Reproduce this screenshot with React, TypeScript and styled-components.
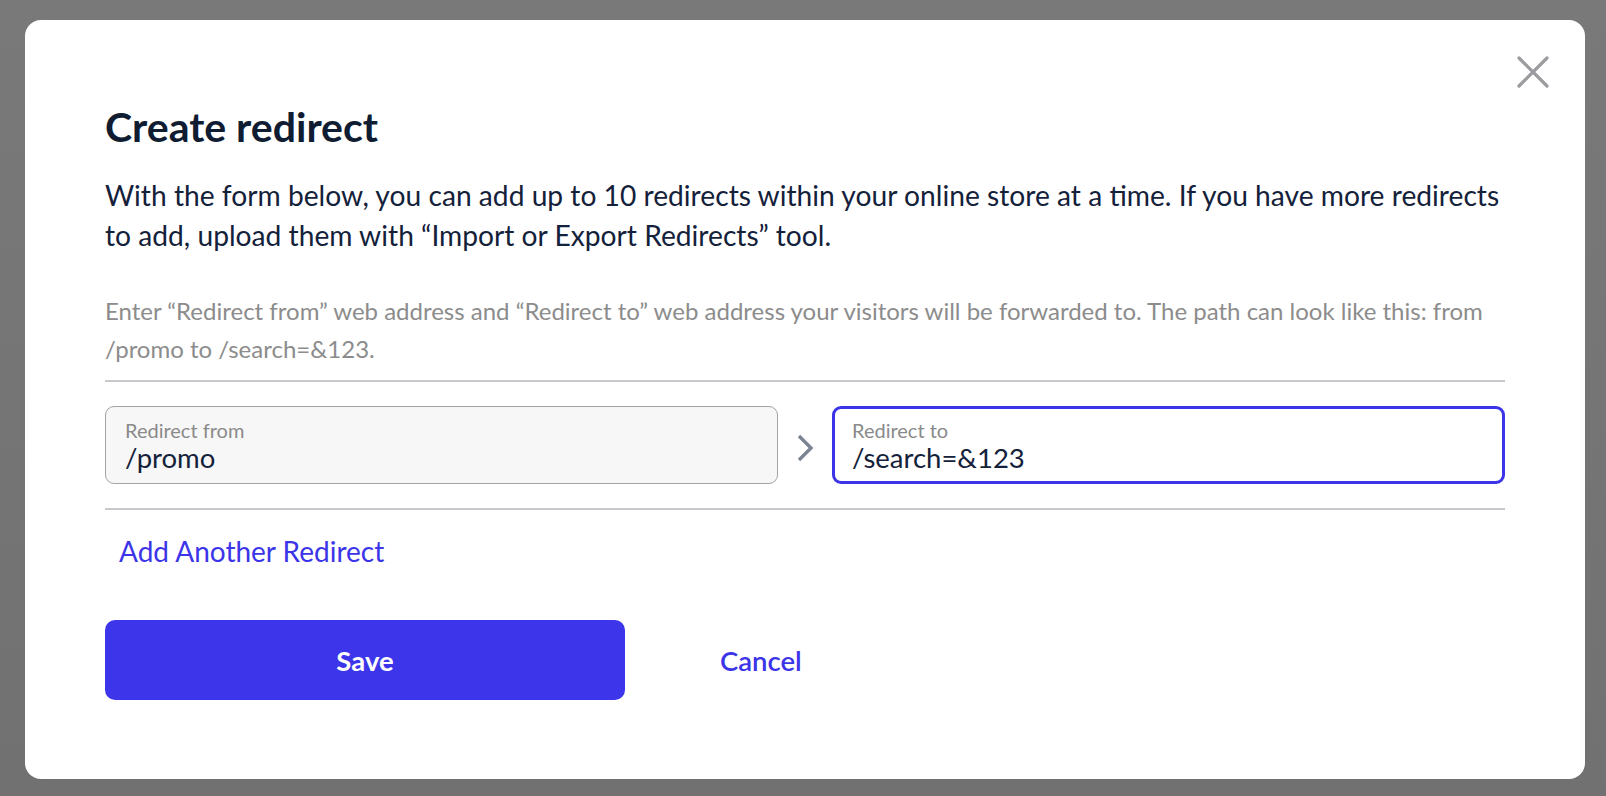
import styled, { createGlobalStyle } from "styled-components";

const GlobalStyle = createGlobalStyle`
  html, body {
    margin: 0;
    padding: 0;
    height: 100%;
  }
  body {
    background: #757575;
    font-family: Lato, "Liberation Sans", sans-serif;
  }
  #root {
    height: 100%;
  }
  * {
    box-sizing: border-box;
  }
`;

const StyledOverlay = styled.div`
  display: flex;
  height: 100vh;
  padding: 20px 21px 17px 25px;
  background: linear-gradient(to bottom, #797979, #717171);
`;

const StyledModal = styled.div`
  position: relative;
  flex: 1;
  background-color: #ffffff;
  border-radius: 16px;
  padding: 83px 80px 0 80px;
  display: flex;
  flex-direction: column;
`;

const StyledClose = styled.button`
  position: absolute;
  top: 32px;
  right: 32px;
  width: 40px;
  height: 40px;
  border: none;
  background: none;
  padding: 0;
  display: flex;
  align-items: center;
  justify-content: center;
  cursor: pointer;
`;

const StyledTitle = styled.h1`
  margin: 0;
  font-size: 41px;
  line-height: 48px;
  font-weight: 700;
  color: #0f1c31;
`;

const StyledLead = styled.p`
  margin: 24px 0 0 0;
  font-size: 28.2px;
  line-height: 40px;
  color: #14213a;
`;

const StyledHint = styled.p`
  margin: 37px 0 0 0;
  padding-bottom: 12px;
  border-bottom: 2px solid #c7c9cd;
  font-size: 24px;
  line-height: 38px;
  color: #8c8c8c;
`;

const StyledRow = styled.div`
  display: flex;
  align-items: center;
  padding: 24px 0 24px 0;
  border-bottom: 2px solid #c7c9cd;
`;

const StyledField = styled.label<{ $active?: boolean }>`
  flex: 1;
  height: 78px;
  display: flex;
  flex-direction: column;
  justify-content: center;
  padding: 3px ${(p) => (p.$active ? "17px" : "19px")} 0;
  border: ${(p) => (p.$active ? "3px solid #3c34e8" : "1.5px solid #a3a3a3")};
  border-radius: 9px;
  background-color: ${(p) => (p.$active ? "#ffffff" : "#f7f7f7")};
`;

const StyledFieldLabel = styled.span`
  font-size: 20px;
  line-height: 22px;
  color: #8a8a8a;
`;

const StyledFieldValue = styled.span`
  font-size: 27.5px;
  line-height: 33px;
  color: #14213a;
`;

const StyledArrow = styled.div`
  width: 54px;
  display: flex;
  justify-content: center;
  padding-top: 6px;
`;

const StyledAddLink = styled.a`
  align-self: flex-start;
  margin: 26px 0 0 14px;
  font-size: 28px;
  line-height: 30px;
  color: #3c34e8;
  text-decoration: none;
  cursor: pointer;
`;

const StyledActions = styled.div`
  display: flex;
  align-items: center;
  margin-top: 54px;
`;

const StyledSave = styled.button`
  width: 520px;
  height: 80px;
  border: none;
  border-radius: 10px;
  background-color: #3d35e9;
  color: #ffffff;
  font-family: inherit;
  font-size: 27.5px;
  font-weight: 700;
  cursor: pointer;
`;

const StyledCancel = styled.button`
  margin-left: 95px;
  border: none;
  background: none;
  padding: 0;
  color: #3c34e8;
  font-family: inherit;
  font-size: 27.5px;
  font-weight: 600;
  cursor: pointer;
`;

function CloseIcon() {
  return (
    <svg width="32" height="32" viewBox="0 0 32 32">
      <path
        d="M2 2 L30 30 M30 2 L2 30"
        stroke="#9b9ba0"
        strokeWidth="3.2"
        strokeLinecap="round"
        fill="none"
      />
    </svg>
  );
}

function ChevronIcon() {
  return (
    <svg width="18" height="28" viewBox="0 0 18 28">
      <path
        d="M3 2 L15 14 L3 26"
        stroke="#7b8592"
        strokeWidth="3.4"
        fill="none"
      />
    </svg>
  );
}

export default function App() {
  return (
    <StyledOverlay>
      <GlobalStyle />
      <StyledModal>
        <StyledClose aria-label="Close">
          <CloseIcon />
        </StyledClose>
        <StyledTitle>Create redirect</StyledTitle>
        <StyledLead>
          With the form below, you can add up to 10 redirects within your online
          store at a time. If you have more redirects to add, upload them with
          “Import or Export Redirects” tool.
        </StyledLead>
        <StyledHint>
          Enter “Redirect from” web address and “Redirect to” web address your
          visitors will be forwarded to. The path can look like this: from
          /promo to /search=&amp;123.
        </StyledHint>
        <StyledRow>
          <StyledField>
            <StyledFieldLabel>Redirect from</StyledFieldLabel>
            <StyledFieldValue>/promo</StyledFieldValue>
          </StyledField>
          <StyledArrow>
            <ChevronIcon />
          </StyledArrow>
          <StyledField $active>
            <StyledFieldLabel>Redirect to</StyledFieldLabel>
            <StyledFieldValue>/search=&amp;123</StyledFieldValue>
          </StyledField>
        </StyledRow>
        <StyledAddLink>Add Another Redirect</StyledAddLink>
        <StyledActions>
          <StyledSave>Save</StyledSave>
          <StyledCancel>Cancel</StyledCancel>
        </StyledActions>
      </StyledModal>
    </StyledOverlay>
  );
}
